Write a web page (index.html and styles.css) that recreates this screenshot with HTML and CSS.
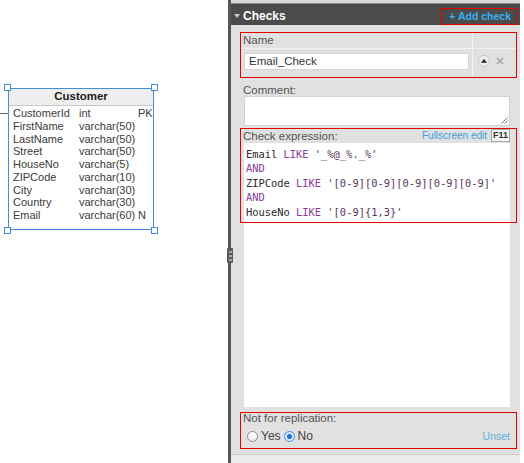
FILE: index.html
```html
<!DOCTYPE html>
<html>
<head>
<meta charset="utf-8">
<title>Checks</title>
<link rel="stylesheet" href="styles.css">
</head>
<body>
<div class="app">
  <div class="canvas">
    <div class="rel-line"></div>
    <div class="entity">
      <div class="entity-title">Customer</div>
      <div class="entity-rows">
        <div class="erow"><span>CustomerId</span><span>int</span><span>PK</span></div>
        <div class="erow"><span>FirstName</span><span>varchar(50)</span><span></span></div>
        <div class="erow"><span>LastName</span><span>varchar(50)</span><span></span></div>
        <div class="erow"><span>Street</span><span>varchar(50)</span><span></span></div>
        <div class="erow"><span>HouseNo</span><span>varchar(5)</span><span></span></div>
        <div class="erow"><span>ZIPCode</span><span>varchar(10)</span><span></span></div>
        <div class="erow"><span>City</span><span>varchar(30)</span><span></span></div>
        <div class="erow"><span>Country</span><span>varchar(30)</span><span></span></div>
        <div class="erow"><span>Email</span><span>varchar(60)</span><span>N</span></div>
      </div>
      <span class="handle tl"></span>
      <span class="handle tr"></span>
      <span class="handle bl"></span>
      <span class="handle br"></span>
    </div>
  </div>

  <div class="splitter"><div class="grip"><i></i><i></i><i></i></div></div>

  <div class="panel">
    <div class="panel-top"></div>
    <div class="panel-header">
      <span class="caret"></span>
      <span class="panel-title">Checks</span>
      <span class="add-check">+ Add check</span>
    </div>
    <div class="panel-body">
      <div class="name-table">
        <div class="nt-head nt-main">Name</div>
        <div class="nt-head"></div>
        <div class="nt-cell nt-main"><div class="text-input">Email_Check</div></div>
        <div class="nt-cell nt-icons">
          <span class="up-btn"><svg width="10" height="10" viewBox="0 0 10 10"><path d="M1.8 6.8 L5 3 L8.2 6.8 Z" fill="#2a2a2a"/></svg></span>
          <svg class="del-btn" width="8" height="8" viewBox="0 0 8 8"><path d="M1 1 L7 7 M7 1 L1 7" stroke="#a0a0a0" stroke-width="1.4"/></svg>
        </div>
      </div>

      <div class="field-label comment-label">Comment:</div>
      <div class="textarea">
        <svg class="grip-corner" width="8" height="8" viewBox="0 0 8 8"><path d="M7.5 1.5 L1.5 7.5 M7.5 4.5 L4.5 7.5" stroke="#777" stroke-width="1"/></svg>
      </div>

      <div class="check-section">
        <div class="check-head">
          <span class="field-label">Check expression:</span>
          <span class="fs-link">Fullscreen edit</span>
          <span class="kbd">F11</span>
        </div>
        <div class="code"><div><span class="id">Email</span> <span class="kw">LIKE</span> <span class="str">'_%@_%._%'</span></div><div><span class="kw">AND</span></div><div><span class="id">ZIPCode</span> <span class="kw">LIKE</span> <span class="str">'[0-9][0-9][0-9][0-9][0-9]'</span></div><div><span class="kw">AND</span></div><div><span class="id">HouseNo</span> <span class="kw">LIKE</span> <span class="str">'[0-9]{1,3}'</span></div></div>
        <div class="mark check-mark"></div>
      </div>

      <div class="replication">
        <div class="field-label rep-label">Not for replication:</div>
        <div class="radios">
          <span class="radio"></span><span class="radio-text">Yes</span>
          <span class="radio checked"></span><span class="radio-text">No</span>
          <span class="unset">Unset</span>
        </div>
      </div>
    </div>
    <div class="panel-bottom"></div>
  </div>
  <div class="rest"></div>
</div>
</body>
</html>
```
FILE: styles.css
```css
* { box-sizing: border-box; }
html, body { margin: 0; padding: 0; background: #fff; }
body { font-family: "Liberation Sans", Arial, sans-serif; font-size: 11.5px; color: #4a4a4a; }

.app { display: flex; width: 524px; height: 463px; overflow: hidden; }

/* ---------- diagram canvas ---------- */
.canvas { position: relative; width: 228px; flex: 0 0 228px; background: #fff; }
.rel-line { position: absolute; left: 0; top: 113px; width: 8px; height: 1px; background: #666; }
.entity {
  position: absolute; left: 8px; top: 88px; width: 146px; height: 142px;
  border: 1px solid #3f8ee0; background: #fff;
}
.entity-title {
  height: 17px; background: #eeeeee; border-bottom: 1px solid #c9c9c9;
  text-align: center; font-weight: bold; font-size: 11.5px; line-height: 15px; color: #222;
}
.entity-rows { padding: 1px 0 0 4px; }
.erow {
  display: grid; grid-template-columns: 66px 59px 1fr;
  font-size: 11px; line-height: 12.75px; color: #3a3a3a; height: 12.75px;
}
.handle {
  position: absolute; width: 7px; height: 7px; background: #fff; border: 1px solid #3f8ee0;
}
.handle.tl { left: -5px; top: -5px; }
.handle.tr { right: -5px; top: -5px; }
.handle.bl { left: -5px; bottom: -5px; }
.handle.br { right: -5px; bottom: -5px; }

/* ---------- splitter ---------- */
.splitter { position: relative; width: 3px; flex: 0 0 3px; background: #575757; }
.grip {
  position: absolute; left: -1px; top: 248px; width: 6px; height: 15px; background: #5a5a5a;
  border-radius: 1px; display: flex; flex-direction: column; align-items: center; justify-content: center; gap: 2px;
}
.grip i { display: block; width: 3px; height: 2px; background: #a8a8a8; }

/* ---------- panel ---------- */
.panel { width: 289px; flex: 0 0 289px; background: #e1e1e1; display: flex; flex-direction: column; }
.panel-top { height: 4px; background: #dadada; border-bottom: 1px solid #8a8a8a; }
.panel-header {
  height: 21px; background: #4b4b4b; display: flex; align-items: center; padding: 0 3px 0 3px;
}
.caret {
  width: 0; height: 0; border-left: 3px solid transparent; border-right: 3px solid transparent;
  border-top: 4px solid #c8c8c8; margin-top: 3px;
}
.panel-title { margin-left: 3px; color: #fff; font-weight: bold; font-size: 12px; margin-top: 2px; }
.add-check {
  margin-left: auto; margin-top: 3px; width: 76px; height: 17px; padding-right: 5px; line-height: 15px;
  text-align: right; color: #35b2ee; font-weight: bold; font-size: 10.5px; border: 1px solid #e00000;
}

.panel-body { flex: 1; display: flex; flex-direction: column; padding: 8px 4px 6px 10px; min-height: 0; }

.name-table {
  display: grid; grid-template-columns: 232px 1fr; outline: 1px solid #e00000;
}
.nt-head { height: 16px; border-bottom: 1px solid #f2f2f2; line-height: 15px; }
.nt-main { border-right: 1px solid #f2f2f2; }
.nt-head.nt-main { padding-left: 2px; color: #555; }
.nt-cell { height: 28px; }
.nt-cell.nt-main { padding: 4px 3px 0 3px; }
.text-input {
  width: 225px; height: 17px; background: #fff; border: 1px solid #d4d4d4; border-radius: 2px;
  padding-left: 4px; line-height: 15px; color: #333;
}
.nt-icons { display: flex; align-items: center; padding-left: 5px; gap: 6px; padding-bottom: 4px; }
.up-btn {
  width: 12px; height: 12px; border-radius: 50%; background: #ececec; border: 1px solid #c8c8c8;
  display: flex; align-items: center; justify-content: center;
}
.up-btn svg { display: block; }
.del-btn { display: block; }

.field-label { color: #555; }
.comment-label { margin-top: 7px; line-height: 12px; height: 12px; padding-left: 2px; }
.textarea {
  position: relative; margin: 0 6px 0 3px; height: 30px; background: #fff; border: 1px solid #d2d2d2;
}
.grip-corner { position: absolute; right: 1px; bottom: 1px; }

.check-section { position: relative; flex: 1; display: flex; flex-direction: column; margin-top: 2px; min-height: 0; }
.check-head { display: flex; align-items: center; height: 15px; padding: 0 6px 0 2px; }
.fs-link { margin-left: auto; color: #3a9fd6; font-size: 10px; }
.kbd {
  margin-left: 4px; width: 19px; height: 13px; border: 1px solid #a8a8a8; background: #f6f6f6;
  font-size: 9px; font-weight: bold; color: #333; text-align: center; line-height: 11px;
}
.code {
  flex: 1; margin: 0 6px 0 3px; background: #fff; padding: 4px 2px;
  font-family: "DejaVu Sans Mono", "Liberation Mono", monospace; font-size: 10.4px; line-height: 14.4px;
  white-space: pre; color: #222;
}
.kw { color: #8a3a9a; }
.str { color: #5a3560; }
.id { color: #2a2a2a; }
.mark { position: absolute; border: 1px solid #e00000; pointer-events: none; }
.check-mark { left: -1px; right: -1px; top: 0; height: 95px; }

.replication { margin-top: 6px; height: 35px; outline: 1px solid #e00000; }
.rep-label { padding-left: 2px; line-height: 10px; height: 10px; }
.radios { display: flex; align-items: center; height: 14px; margin-top: 6px; padding: 0 6px 0 6px; }
.radio {
  width: 11px; height: 11px; border-radius: 50%; border: 1px solid #8d8d8d;
  background: linear-gradient(#ffffff, #ececec); position: relative; flex: 0 0 11px;
}
.radio.checked { border-color: #3d8ee6; background: #dbeafb; }
.radio.checked::after {
  content: ""; position: absolute; left: 2px; top: 2px; width: 5px; height: 5px; border-radius: 50%; background: #1f6fd8;
}
.radio-text { margin-left: 3px; margin-right: 3px; color: #444; font-size: 12px; }
.unset { margin-left: auto; color: #5db1df; font-size: 10.5px; }

.panel-bottom { height: 9px; background: #ececec; border-top: 1px solid #cdcdcd; }

.rest { flex: 1; background: #fff; }
```
